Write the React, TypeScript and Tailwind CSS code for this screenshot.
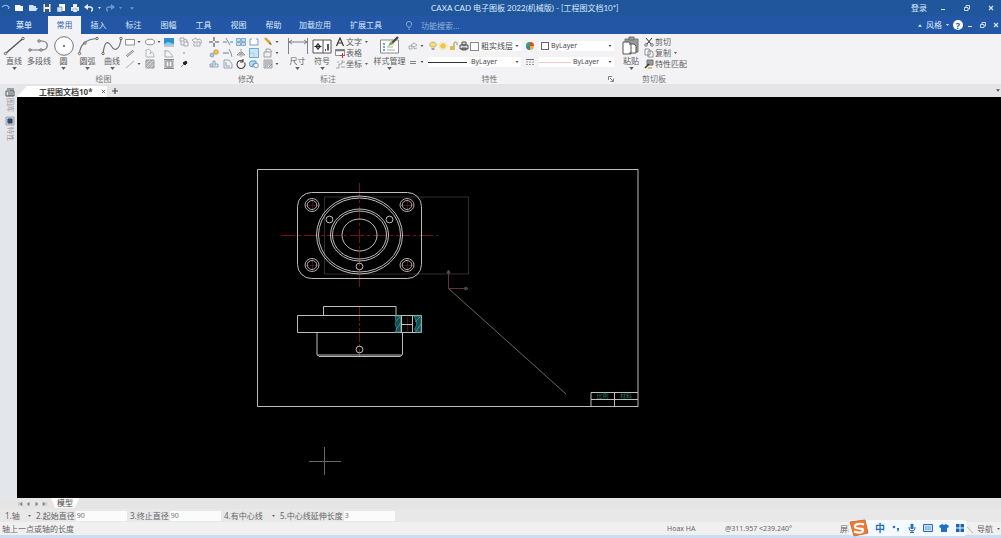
import React from "react";

type P = { className?: string; children?: React.ReactNode };

function Svg({ box, className, children }: P & { box: string }) {
  return (
    <svg viewBox={box} className={className} fill="none" stroke="#70757a" strokeWidth="1" aria-hidden="true">
      {children}
    </svg>
  );
}

function Small({ children }: P) {
  return <Svg box="0 0 10 10" className="h-[10px] w-[10px] shrink-0">{children}</Svg>;
}

function Arrow({ className = "h-[3px] w-[4px]" }: P) {
  return (
    <svg viewBox="0 0 6 4" className={"shrink-0 " + className} fill="currentColor" aria-hidden="true">
      <path d="M0 0h6L3 4z" />
    </svg>
  );
}

/* ---------- title bar ---------- */

const quick: { label: string; art: React.ReactNode }[] = [
  { label: "新建", art: <path d="M1 2h5l1 1h2v5H1z" fill="#f4f8ff" stroke="none" /> },
  { label: "打开", art: <path d="M1 2h4l1 1h2v2h2L8 8H1z" fill="#cfe2f8" stroke="none" /> },
  { label: "保存", art: <><path d="M1.500 1h7v8h-7z" fill="#e8eef5" stroke="none" /><path d="M3 1h4v3H3zM3 6h4v3H3z" fill="#456" stroke="none" /></> },
  { label: "另存为", art: <><path d="M3 1h6v7H3z" fill="#fff" stroke="none" /><path d="M1 4h5v5H1z" fill="#d4e2f2" stroke="#35629c" strokeWidth=".6" /></> },
  { label: "打印", art: <><path d="M1 4h8v4H1zM3 1h4v3H3z" fill="#e4ecf7" stroke="none" /><path d="M3 6h4v3H3z" fill="#fff" stroke="#6b86ac" strokeWidth=".6" /></> },
];

function TitleBar() {
  return (
    <header className="flex h-4 items-center bg-[#20579c] text-[8px] leading-none text-blue-100">
      <div className="flex w-[431px] shrink-0 items-center pl-px">
        <Svg box="0 0 10 10" className="mr-1 h-[10px] w-[9px]">
          <path d="M1 4c3-3 6-2 8 0M6 2l3 2-1 2" stroke="#8cc0f2" strokeWidth="1.200" />
        </Svg>
        {quick.map((q) => (
          <button key={q.label} aria-label={q.label} className="mr-1 h-[10px] w-[10px]">
            <Svg box="0 0 10 10" className="h-[10px] w-[10px]">{q.art}</Svg>
          </button>
        ))}
        <button aria-label="撤销" className="flex items-center gap-1">
          <Svg box="0 0 10 10" className="h-[10px] w-[10px]">
            <path d="M1 4h5c3 0 3 4 1 4" stroke="#e6f0ff" strokeWidth="1.500" /><path d="M4 1L0 4l4 3z" fill="#e6f0ff" stroke="none" />
          </Svg>
          <Arrow className="h-[2px] w-[3px]" />
        </button>
        <button aria-label="重做" className="ml-1 flex items-center gap-1 text-[#6d97d0]">
          <Svg box="0 0 10 10" className="h-[10px] w-[10px]">
            <path d="M9 4H4C1 4 1 8 3 8" stroke="#6d97d0" strokeWidth="1.300" /><path d="M6 1l4 3-4 3z" fill="#6d97d0" stroke="none" />
          </Svg>
          <Arrow className="h-[2px] w-[3px]" />
          <Arrow className="ml-1 h-[3px] w-[4px]" />
        </button>
      </div>
      <h1 className="font-[Lato,'Noto_Sans_CJK_SC',sans-serif] whitespace-nowrap">CAXA CAD 电子图板 2022(机械版) - [工程图文档10*]</h1>
      <div className="ml-auto flex items-center pr-[7px]">
        <button className="mr-[13px]">登录</button>
        <WindowButtons className="gap-[18px]" />
      </div>
    </header>
  );
}

function WindowButtons({ className = "" }: P) {
  return (
    <div className={"flex items-center " + className}>
      <button aria-label="最小化"><Svg box="0 0 6 6" className="h-[6px] w-[6px]"><path d="M1 4.500h4" stroke="#dbe8fb" /></Svg></button>
      <button aria-label="还原"><Svg box="0 0 6 6" className="h-[6px] w-[6px]"><path d="M.5 2.500h3.500v3H.5zM2 2V.5h3.500v3.500H4" stroke="#dbe8fb" strokeWidth=".9" /></Svg></button>
      <button aria-label="关闭"><Svg box="0 0 6 6" className="h-[6px] w-[6px]"><path d="M1 1l4 4M5 1L1 5" stroke="#dbe8fb" strokeWidth="1.100" /></Svg></button>
    </div>
  );
}

/* ---------- ribbon tabs ---------- */

const tabs = ["插入", "标注", "图幅", "工具", "视图", "帮助"];

function RibbonTabs() {
  return (
    <nav className="flex h-[18px] items-center bg-[#2357a5] text-[8px] leading-none text-blue-100">
      <button className="h-full w-12 shrink-0 font-medium">菜单</button>
      <button className="h-full w-[33px] shrink-0 bg-[#f3f3f5] text-[#2f62ad]">常用</button>
      {tabs.map((t) => (
        <button key={t} className="h-full w-[35px] shrink-0">{t}</button>
      ))}
      <button className="h-full w-[48px] shrink-0 whitespace-nowrap">加载应用</button>
      <button className="h-full w-[54px] shrink-0 whitespace-nowrap">扩展工具</button>
      <label className="ml-3 flex items-center gap-2 text-[#91b2df]">
        <Svg box="0 0 8 10" className="h-[9px] w-[8px]">
          <path d="M3 7C3 6 1 5 1 3.500a3 3 0 016 0C7 5 5 6 5 7zM3 9h2" stroke="#8fbdf0" strokeWidth=".9" />
        </Svg>
        <input className="w-[60px] bg-transparent placeholder:text-[#91b2df]" placeholder="功能搜索..." aria-label="功能搜索" />
      </label>
      <div className="ml-auto flex items-center pr-[2px]">
        <button className="flex items-center gap-1"><Arrow className="h-[3px] w-[4px] rotate-180" />风格<Arrow className="h-[2px] w-[3px]" /></button>
        <button aria-label="帮助" className="mx-1 flex h-[10px] w-[10px] items-center justify-center rounded-full bg-white text-[9px] font-bold text-[#2357a5]">?</button>
        <WindowButtons className="gap-[7px]" />
      </div>
    </nav>
  );
}

/* ---------- ribbon ---------- */

function Group({ title, className = "", children, launcher }: P & { title: string; launcher?: boolean }) {
  return (
    <section className={"flex shrink-0 flex-col " + className}>
      <div className="flex h-10 pt-[2px]">{children}</div>
      <div className="flex h-[10px] items-center">
        <h2 className="flex-1 text-center text-[#777]">{title}</h2>
        {launcher && (
          <button aria-label="特性设置" className="mr-1">
            <Svg box="0 0 6 6" className="h-[6px] w-[6px]"><path d="M.5 4V.5H4M2 2l3 3M5.500 2.500v3h-3" strokeWidth=".9" /></Svg>
          </button>
        )}
      </div>
    </section>
  );
}

function Big({ label, className = "w-[24px]", arrow = true, children }: P & { label: string; arrow?: boolean }) {
  return (
    <button className={"flex shrink-0 flex-col items-center whitespace-nowrap text-[#5c5c5c] " + className}>
      <Svg box="0 0 22 20" className="h-5 w-[22px] shrink-0">{children}</Svg>
      <span className="h-[9px] leading-[9px]">{label}</span>
      {arrow && <Arrow className="mt-[2px] h-[3px] w-[5px]" />}
    </button>
  );
}

function End({ x, y }: { x: number; y: number }) {
  return <circle cx={x} cy={y} r="1.200" fill="#fff" stroke="#555" strokeWidth=".9" />;
}

function Tool({ name, arrow, className = "w-[14px]", children }: P & { name: string; arrow?: boolean }) {
  return (
    <button aria-label={name} className={"flex h-[11px] shrink-0 items-center gap-[2px] text-[#555] " + className}>
      <Small>{children}</Small>
      {arrow && <Arrow className="h-[2px] w-[4px]" />}
    </button>
  );
}

function DrawGroup() {
  return (
    <Group title="绘图" className="w-[207px]">
      <div className="flex w-[125px] shrink-0 pl-[2px]">
        <Big label="直线" className="w-[24px]"><path d="M2.500 17.500L20 2.500" stroke="#555" strokeWidth="1.400" /><End x={2.500} y={17.500} /><End x={20} y={2.500} /></Big>
        <Big label="多段线" className="w-[26px]" arrow={false}><path d="M2 14h12c7 0 7-9 0-9h-3" strokeWidth="1.200" /><End x={2} y={14} /><End x={13} y={14} /><End x={11} y={5} /></Big>
        <Big label="圆" className="w-[23px]"><circle cx="11" cy="10" r="9.300" fill="#fff" /><circle cx="11" cy="10" r="1" fill="#555" stroke="none" /></Big>
        <Big label="圆弧" className="w-[25px]"><path d="M2.500 17.500C3 9 9 3 20 2.500" strokeWidth="1.200" /><End x={2.500} y={17.500} /><End x={8} y={7} /><End x={20} y={2.500} /></Big>
        <Big label="曲线" className="w-[24px]"><path d="M2 17.500C4 2 8 6 11 11s8 2 9-8.500" strokeWidth="1.200" /><End x={2} y={17.500} /><End x={20} y={2.500} /></Big>
      </div>
      <div className="grid grid-cols-[20px_19px_15px_13px_14px] content-start">
        <Tool name="矩形" arrow className="w-[18px]"><path d="M.5 2.500h9v5.500h-9z" fill="#fff" strokeWidth=".8" /></Tool>
        <Tool name="椭圆" arrow className="w-[18px]"><ellipse cx="5" cy="5" rx="4.500" ry="2.800" fill="#fff" strokeWidth=".8" /></Tool>
        <Tool name="图片"><path d="M0 1h10v7H0z" fill="#318fd0" stroke="none" /><path d="M0 7l4-2 6 2v1H0z" fill="#8bc8ee" stroke="none" /><path d="M0 9h10" strokeWidth=".7" /></Tool>
        <Tool name="块"><path d="M1 1h4v3H1zM2 4v4h3M5 5h4v4H5zM5 2l3 1v2" stroke="#8e8e96" strokeWidth=".7" /></Tool>
        <Tool name="外部引用"><path d="M2 5h6v4H2zM2 5L0 3l4-2 1 2 3-1 2 3-2 2M4 7h2" stroke="#8e8e96" strokeWidth=".7" /></Tool>
        <Tool name="平行线"><path d="M1 8l7-6M2 9l7-6" strokeWidth=".9" /></Tool>
        <Tool name="局部放大"><path d="M1 2v7h8M1 2c4-2 6 1 4 4M5 6c2-4 4-1 4 3" stroke="#9aa0a5" strokeWidth=".7" /></Tool>
        <Tool name="样条"><path d="M1 9V2M1 3c5-1 6 3 8 6M1 9h8" stroke="#8a8f94" strokeWidth=".7" /></Tool>
        <Tool name="点"><circle cx="5" cy="5" r=".7" fill="#666" stroke="none" /></Tool>
        <span />
        <Tool name="中心线" arrow className="w-[18px]"><path d="M1 9l8-7" stroke="#999" strokeWidth=".8" /></Tool>
        <Tool name="填充"><path d="M1 1h8v8H1z" fill="#b5b5b5" stroke="#999" /><path d="M1 5l4-4M1 9l8-8M5 9l4-4" stroke="#eee" strokeWidth=".5" /></Tool>
        <Tool name="剖面线"><path d="M-1 .5h12v9H-1z" fill="#c9c9cb" strokeWidth=".8" /><path d="M2 2h6v6H2zM5 2v6" fill="#f2f2f2" strokeWidth=".8" /></Tool>
        <Tool name="刷子"><path d="M2 8l3-3" strokeWidth=".8" /><path d="M4 4l3-2 1 2-2 2z" fill="#222" stroke="#222" /></Tool>
      </div>
    </Group>
  );
}

function ModifyGroup() {
  return (
    <Group title="修改" className="w-[78px]">
      <div className="grid grid-cols-[14px_13px_13px_14px_20px] content-start pl-[2px]">
        <Tool name="平移"><path d="M5 0v4M5 6v4M0 5h4M6 5h4" stroke="#555" strokeWidth="1.200" /></Tool>
        <Tool name="裁剪"><path d="M0 5h4M7 5h3" stroke="#4389c7" /><path d="M3 1l4 7" strokeWidth=".8" /></Tool>
        <Tool name="阵列"><path d="M.5 1.500h4v3h-4zM5.500 1.500h4v3h-4zM.5 5.500h4v3h-4zM5.500 5.500h4v3h-4z" stroke="#6b9dc4" fill="#c4dcf0" strokeWidth=".8" /></Tool>
        <Tool name="拉伸"><path d="M1 2v6h8V2M1 2h2M7 2h2" stroke="#6688aa" strokeWidth=".8" fill="#fff" /></Tool>
        <Tool name="删除" arrow className="w-[20px]"><path d="M2 1l5 5" stroke="#e59b25" strokeWidth="2.400" /><path d="M7 5l2 3-3-1z" fill="#754d2a" stroke="none" /></Tool>
        <Tool name="复制"><circle cx="7" cy="4" r="2.300" fill="#f1c54c" stroke="#a9822a" strokeWidth=".6" /><circle cx="3" cy="7" r="2" fill="#a8cbe5" strokeWidth=".5" /></Tool>
        <Tool name="延伸"><path d="M0 5h6" stroke="#4389c7" /><path d="M6 1l2 4 1 4" strokeWidth=".8" /></Tool>
        <Tool name="镜像"><path d="M5 1v8M4 4L1 7h3zM6 4l3 3H6z" strokeWidth=".7" /></Tool>
        <Tool name="缩放"><path d="M.5.5h9v9h-9z" fill="#cce6f7" stroke="#4e9acb" strokeWidth=".8" /><path d="M1 5h4v4" stroke="#8dbddd" strokeWidth=".6" /></Tool>
        <Tool name="分解" arrow className="w-[20px]"><path d="M1 4h7v5H1zM3 4V1h4l2 3" stroke="#8e8e92" strokeWidth=".8" fill="#eee" /></Tool>
        <Tool name="偏移"><path d="M1 8V5h3V2h2v3h3v3zM3 8V6h4" stroke="#7790a8" strokeWidth=".8" /></Tool>
        <Tool name="倒角"><path d="M1 1h5l3 4v4H1zM3 3v4h4" stroke="#7790a8" strokeWidth=".8" /></Tool>
        <Tool name="旋转"><path d="M7 2a4 4 0 101.500 1.500M7 0v3H4" stroke="#444" strokeWidth="1.100" /></Tool>
        <Tool name="缩放图形"><path d="M1 7a3 3 0 013-5h3v3H4v3z" stroke="#3f87bd" fill="#b9d9ee" strokeWidth=".8" /><circle cx="7" cy="6.500" r="2.300" stroke="#4586ad" fill="#fff" strokeWidth=".8" /></Tool>
        <Tool name="编辑" arrow className="w-[20px]"><path d="M1 1h8v8H1z" fill="#ddd" stroke="#8e8e92" strokeWidth=".8" /><path d="M2 3h6M2 5h6M2 7h3M6 8l3-3" strokeWidth=".7" /></Tool>
      </div>
    </Group>
  );
}

function Row({ label, arrow, children }: P & { label: string; arrow?: boolean }) {
  return (
    <button className="flex h-[11px] items-center gap-px whitespace-nowrap text-[#5c5c5c]">
      <Small>{children}</Small>
      {label}
      {arrow && <Arrow className="ml-[2px] h-[2px] w-[3px]" />}
    </button>
  );
}

function NoteGroup() {
  return (
    <Group title="标注" className="w-[86px]">
      <Big label="尺寸" className="w-[25px]"><path d="M1.500 2v16M20.500 2v16M2 6h18M5 4L2 6l3 2M17 4l3 2-3 2" strokeWidth=".9" /></Big>
      <Big label="符号" className="w-[24px]"><path d="M2 4h18v13H2zM12 4v13" fill="#fff" stroke="#555" /><circle cx="7" cy="10.500" r="2" stroke="#222" /><path d="M3.500 10.500h7M7 7v7" stroke="#222" /><path d="M14 14h1M17 8v6.500" stroke="#222" strokeWidth="1.500" /></Big>
      <div className="flex flex-col pl-[1px]">
        <Row label="文字" arrow><path d="M1.500 9L5 1l3.500 8M3 6h4" stroke="#333" strokeWidth="1.200" /></Row>
        <Row label="表格"><path d="M.5 1.500h9v6h-9z" fill="#fff" strokeWidth=".8" /><path d="M.5 2.500h9" strokeWidth="1.500" /><path d="M7.500 5v5M5 7.500h5" stroke="#bd3d48" strokeWidth="1.200" /></Row>
        <Row label="坐标" arrow><path d="M1 9h3V5h3V1M7 3h3M2 3h2M6 8h4" stroke="#8a8f94" strokeWidth=".8" /></Row>
      </div>
    </Group>
  );
}

function Combo({ label, value, className, children }: P & { label: string; value: string }) {
  return (
    <div className={"flex h-[10px] shrink-0 items-center bg-white pr-[2px] text-[#4c4c4c] " + className}>
      {children}
      <select aria-label={label} className="h-[10px] min-w-0 flex-1 appearance-none bg-transparent p-0 leading-[10px]">
        <option>{value}</option>
      </select>
      <Arrow className="h-[2px] w-[4px]" />
    </div>
  );
}

function PropertyGroup() {
  return (
    <Group title="特性" launcher className="w-[247px]">
      <Big label="样式管理" className="w-[37px]">
        <path d="M1.500 4h18v13h-18z" fill="#fff" stroke="#888" /><path d="M4 8h2M4 11h2M4 14h2" stroke="#468bc8" strokeWidth="1.400" /><path d="M8 11h6M8 14h8" stroke="#aaa" /><path d="M13 7l6-6" stroke="#484848" strokeWidth="2.400" /><path d="M9 10l3-5 3 3z" fill="#85a548" stroke="none" />
      </Big>
      <div className="flex flex-col gap-[6px] pt-[5px]">
        <div className="flex h-[10px] items-center">
          <Tool name="图层" arrow className="w-[20px]"><path d="M1 8V5h3v3zM3 4l3-2 3 2-3 2zM6 6v2l3-1" stroke="#8a8f94" strokeWidth=".7" /></Tool>
          <Tool name="打开图层" className="w-[10px]"><path d="M3 6C0 3 3 1 5 1s5 2 2 5z" fill="#f5df70" stroke="#a6a06d" strokeWidth=".7" /><path d="M3.500 8h3" stroke="#555" /></Tool>
          <Tool name="冻结图层" className="w-[11px]"><circle cx="5" cy="5" r="2.800" fill="#f5c43c" stroke="none" /><circle cx="5" cy="5" r="4" stroke="#f5d675" strokeDasharray="1 1" /></Tool>
          <Tool name="锁定图层" className="w-[10px]"><path d="M1 5h5v4H1z" fill="#e1b85a" stroke="none" /><path d="M5 5V2c1-2 4-1 3 2" stroke="#96875e" /></Tool>
          <Tool name="打印图层" className="w-[11px]"><path d="M1 4h8v4H1zM3 1h4v3H3zM3 7h4v2H3z" fill="#ddd" stroke="#444" strokeWidth=".9" /></Tool>
          <Combo label="当前图层" value="粗实线层" className="w-[51px]"><span className="mr-[2px] h-[9px] w-[9px] border border-[#888] bg-white" /></Combo>
          <Tool name="颜色" className="ml-1 w-[14px]"><circle cx="5" cy="5" r="4" fill="#e9b22e" stroke="none" /><path d="M5 5V1a4 4 0 00-4 4z" fill="#41a45a" stroke="none" /><path d="M5 5V1a4 4 0 014 4z" fill="#da4c39" stroke="none" /><path d="M5 5H1a4 4 0 004 4z" fill="#377fce" stroke="none" /></Tool>
          <Combo label="颜色" value="ByLayer" className="w-[75px] pl-[2px] text-[7px]"><span className="mr-[2px] h-[8px] w-[8px] border border-[#5d6674] bg-white" /></Combo>
        </div>
        <div className="flex h-[10px] items-center">
          <Tool name="线型" arrow className="w-[20px]"><path d="M2 4.500h6M2 6.500h6" strokeWidth=".9" /></Tool>
          <Combo label="线型" value="ByLayer" className="w-[93px] text-[7px]"><span className="mr-1 h-px w-[39px] bg-[#333]" /></Combo>
          <Tool name="线宽" className="ml-1 w-[14px]"><path d="M1 2.500h8" /><path d="M1 5h8M1 7.500h8" stroke="#999" strokeDasharray="2 1" /></Tool>
          <Combo label="线宽" value="ByLayer" className="w-[75px] text-[7px]"><span className="mr-[2px] h-px w-[32px] bg-[#f0c8cb]" /></Combo>
        </div>
      </div>
    </Group>
  );
}

function ClipboardGroup() {
  return (
    <Group title="剪切板" className="w-[72px]">
      <Big label="粘贴" className="w-[26px]"><path d="M5 3h13v13H5z" fill="#999" stroke="#777" /><path d="M9 1h5v3H9z" fill="#999" /><path d="M3 6h6l2 2v10H3zM9 8h5l2 2v7H9" fill="#fff" stroke="#555" /></Big>
      <div className="flex flex-col">
        <Row label="剪切"><path d="M2 1l5 6M8 1L3 7" stroke="#333" /><circle cx="2" cy="8" r="1.300" /><circle cx="8" cy="8" r="1.300" /></Row>
        <Row label="复制" arrow><path d="M1 1h4l1 1v5H1zM4 3h4l1 2v4H4z" fill="#fff" strokeWidth=".8" /></Row>
        <Row label="特性匹配"><path d="M3 1h6v5H3z" fill="#999" /><path d="M1 9l4-4" stroke="#333" strokeWidth="1.500" /><path d="M4 9h4" stroke="#d8ac36" strokeWidth="1.500" /></Row>
      </div>
    </Group>
  );
}

/* ---------- drawing area ---------- */

const bolts = [[312, 205], [407, 205], [312, 265], [407, 265]];
const pins = [[329.5, 219.5], [389.5, 219.5], [359.5, 266.5], [359.5, 349.5]];

function Drawing() {
  return (
    <svg viewBox="17 97 984 401" preserveAspectRatio="xMinYMin meet" className="h-full w-full" fill="none" stroke="#bebebe" strokeWidth="1" role="img" aria-label="模型">
      <path d="M257.500 169.500h380.500v237H257.500z" stroke="#bcbcbc" />
      <path d="M324.500 197h144v77h-144z" stroke="#352c2e" />
      <g stroke="#741419">
        <path d="M281 235.500h157M359.500 183v104" strokeDasharray="14 3 3 3" />
        <path d="M359.500 307v50" strokeDasharray="14 2 3 2" />
        <path d="M407.500 317v14M400 205.500h14M407.500 198v14M305 205.500h14M312.500 198v14M305 265.500h14M312.500 258v14M400 265.500h14M407.500 258v14" stroke="#451115" />
      </g>
      <rect x="297.500" y="192.500" width="124" height="86" rx="14" />
      <ellipse cx="359.500" cy="235" rx="43" ry="39" />
      <ellipse cx="359.500" cy="235" rx="41" ry="37" />
      <ellipse cx="359.500" cy="235" rx="29" ry="26" />
      <ellipse cx="359.500" cy="235" rx="27" ry="24" />
      <ellipse cx="359.500" cy="235" rx="17.500" ry="16" />
      {bolts.map(([x, y]) => (
        <g key={x + "-" + y} strokeWidth=".9">
          <ellipse cx={x} cy={y} rx="7" ry="6.500" />
          <ellipse cx={x} cy={y} rx="4.800" ry="4.500" />
        </g>
      ))}
      {pins.map(([x, y]) => <circle key={x + "-" + y} cx={x} cy={y} r="3.400" />)}
      <path d="M323.500 315v-8.500h72.500v8.500M297.500 315.500h124v17h-124zM317 332.500v22l2 2h81.500l2-2v-22M317 355h85" />
      <path d="M395 316h5.500v16H395c4-5-2-6 1-11zM414 316h7v16h-5c-4-5 3-5 0-11z" fill="#174d50" stroke="#2f8f90" strokeWidth=".8" />
      <path d="M396 330l5-8M396 321l4-4M415 322l5-5M416 331l5-7" stroke="#59a9aa" strokeWidth=".7" />
      <path d="M401.500 315v17M412.500 315v17M401.500 324.500h11" />
      <path d="M448.500 288v-17M448.500 288.500h18" stroke="#60333a" />
      <path d="M447 273l1.500-3 1.500 3zM465 287l3 1.500-3 1.500z" stroke="#645155" />
      <path d="M448.500 288.500L566 394" stroke="#5d6b5d" />
      <path d="M591 406.500v-14h47M614.500 392.500v14M591 399.500h47" />
      <path d="M309 461.500h32M324.500 447v28" stroke="#666" />
      <g fill="#267462" stroke="none" fontSize="6" fontFamily="Noto Sans CJK SC, sans-serif" textAnchor="middle">
        <text x="602.500" y="398">比例</text>
        <text x="626" y="398">材料</text>
      </g>
    </svg>
  );
}

function SideItem({ label, children }: P & { label: string }) {
  return (
    <button className="flex flex-col items-center gap-px text-[7px] leading-none text-[#999]">
      <Svg box="0 0 10 10" className="h-[10px] w-[10px]">{children}</Svg>
      <span className="[text-orientation:sideways] [writing-mode:vertical-rl]">{label}</span>
    </button>
  );
}

function Workspace() {
  return (
    <div className="flex min-h-0 flex-1">
      <aside className="flex w-[17px] shrink-0 flex-col items-center gap-1 bg-[#e3e7eb] pt-[3px] pl-[3px]">
        <SideItem label="图库"><path d="M1 4h8v5H1zM2 2h3M6 1v3M8 1v3M3 6h5M3 8h5" stroke="#555" /></SideItem>
        <SideItem label="特性"><path d="M1 1h8v8H1z" fill="#c3c9d0" stroke="#a2a9b1" /><path d="M3 3h4v4H3z" fill="#245588" stroke="#345" /></SideItem>
      </aside>
      <div className="flex min-w-0 flex-1 flex-col">
        <div className="flex h-[13px] shrink-0 items-center bg-[#e5e5e7] text-[8px] text-[#444]">
          <div className="flex h-[11px] w-[90px] items-center gap-2 self-end bg-white pr-1 pl-[22px] [clip-path:polygon(10px_0,100%_0,100%_100%,0_100%)]">
            <span className="font-bold whitespace-nowrap">工程图文档10*</span>
            <button aria-label="关闭文档" className="ml-auto"><Svg box="0 0 6 6" className="h-[5px] w-[5px]"><path d="M1 1l4 4M5 1L1 5" stroke="#555" /></Svg></button>
          </div>
          <button aria-label="新建文档" className="ml-1"><Svg box="0 0 8 8" className="h-[8px] w-[8px]"><path d="M4 1v6M1 4h6" stroke="#444" strokeWidth="1.200" /></Svg></button>
          <button aria-label="文档列表" className="mr-px ml-auto text-[#555]"><Arrow /></button>
        </div>
        <main className="min-h-0 flex-1 overflow-hidden bg-black"><Drawing /></main>
      </div>
    </div>
  );
}

/* ---------- bottom bars ---------- */

const steps = ["M1 0v5M5 0L2 2.500 5 5z", "M4 0L1 2.500 4 5z", "M2 0l3 2.500L2 5z", "M5 0v5M1 0l3 2.500L1 5z"];

function Field({ label, value, id, className }: { label: string; value: string; id: string; className: string }) {
  return (
    <div className={"flex shrink-0 items-center gap-px whitespace-nowrap " + className}>
      <label htmlFor={id}>{label}</label>
      <input id={id} defaultValue={value} className="h-[10px] w-0 flex-1 bg-[#fbfbfb] pl-px text-[7px] leading-[10px] text-[#777]" />
    </div>
  );
}

function Choice({ label, value, id, className }: { label: string; value: string; id: string; className: string }) {
  return (
    <div className={"flex shrink-0 items-center " + className}>
      <label htmlFor={id}>{label}</label>
      <select id={id} className="h-[10px] w-0 flex-1 appearance-none bg-transparent p-0 leading-[10px]"><option>{value}</option></select>
      <Arrow className="h-[2px] w-[3px]" />
    </div>
  );
}

function ImeBar() {
  return (
    <div className="absolute right-[34px] bottom-[2px] flex h-[16px] items-center gap-[6px] rounded bg-[#f4faff] pr-[2px] text-[#2b70be]">
      <Svg box="0 0 20 18" className="h-[18px] w-[20px]">
        <path d="M1 3l15-2 3 13-14 3z" fill="#ec7a38" stroke="#d96a2a" />
        <path d="M15 5.500C11 4 5 5 6 8s9 0 8 3.500-6 2-9 1" stroke="#fff" strokeWidth="2.200" />
      </Svg>
      <button className="w-[10px] text-[10px] leading-none font-bold">中</button>
      <button aria-label="标点"><Svg box="0 0 10 10" className="h-[10px] w-[10px]"><circle cx="3" cy="4" r="1.300" fill="#2b70be" stroke="none" /><path d="M6 5h2v2L6.500 9z" fill="#2b70be" stroke="none" /></Svg></button>
      <button aria-label="语音"><Svg box="0 0 10 10" className="h-[10px] w-[10px]"><path d="M3.500 1h3v5h-3z" fill="#2b70be" stroke="none" /><path d="M2 4v1a3 3 0 006 0V4M5 8v2M3 9.500h4" stroke="#2b70be" /></Svg></button>
      <button aria-label="键盘"><Svg box="0 0 10 10" className="h-[10px] w-[10px]"><path d="M.5 1.500h9v7h-9z" fill="#d0e5fa" stroke="#2b70be" /><path d="M2 4h6M2 6h6" stroke="#2b70be" strokeDasharray="1 .6" /></Svg></button>
      <button aria-label="皮肤"><Svg box="0 0 10 10" className="h-[10px] w-[10px]"><path d="M3 1l2 1 2-1 3 2-1 2-1-.5V9H2V4.500L1 5 0 3z" fill="#1c71c9" stroke="none" /></Svg></button>
      <button aria-label="工具箱"><Svg box="0 0 10 10" className="h-[10px] w-[10px]"><path d="M1 1h3.500v3.500H1zM5.500 1H9v3.500H5.500zM1 5.500h3.500V9H1zM5.500 5.500H9V9H5.500z" fill="#1c65b7" stroke="none" /></Svg></button>
    </div>
  );
}

function BottomBars() {
  return (
    <footer className="relative shrink-0 text-[8px] leading-none text-[#666]">
      <div className="flex h-[11px] items-center bg-[#e5e5e6] pl-[18px]">
        {steps.map((d) => (
          <button key={d} aria-label="翻页" className="mr-[3px]"><svg viewBox="0 0 6 5" className="h-[4px] w-[5px]" fill="#888" stroke="#888" strokeWidth=".5"><path d={d} /></svg></button>
        ))}
        <button className="ml-px h-[10px] w-[28px] self-start bg-white text-[#444] [clip-path:polygon(0_0,100%_0,85%_100%,15%_100%)]">模型</button>
      </div>
      <div className="flex h-[13px] items-center bg-[#e8e8e9] pl-[5px]">
        <Choice id="mode" label="1." value="轴" className="w-[26px]" />
        <Field id="start" label="2.起始直径" value="90" className="ml-[5px] w-[91px]" />
        <Field id="end" label="3.终止直径" value="90" className="ml-[3px] w-[91px]" />
        <Choice id="axis" label="4." value="有中心线" className="ml-[3px] w-[51px]" />
        <Field id="extend" label="5.中心线延伸长度" value="3" className="ml-[5px] w-[115px]" />
      </div>
      <div className="flex h-[13px] items-center bg-[#f0f0f1] pl-[2px] whitespace-nowrap">
        <span className="flex-1">轴上一点或轴的长度</span>
        <span className="w-[58px] text-[7px]">Hoax HA</span>
        <span className="w-[115px] text-[7px]">@311.957 &lt;239.240°</span>
        <button className="w-[124px] text-left">屏幕点</button>
        <button className="flex w-[37px] items-center justify-end gap-1 pr-px"><span>╲</span>导航<Arrow className="h-[2px] w-[3px]" /></button>
      </div>
      <div className="h-[3px] bg-[#cbdcf3]" />
      <ImeBar />
    </footer>
  );
}

export default function App() {
  return (
    <div className="flex h-screen flex-col overflow-hidden bg-[#e5e5e7] font-['Noto_Sans','Noto_Sans_CJK_SC',sans-serif]">
      <TitleBar />
      <RibbonTabs />
      <div className="flex h-[50px] shrink-0 bg-[#f3f3f5] text-[8px] leading-none">
        <DrawGroup />
        <ModifyGroup />
        <NoteGroup />
        <PropertyGroup />
        <ClipboardGroup />
      </div>
      <div className="flex min-h-0 flex-1 flex-col text-[8px] leading-none"><Workspace /></div>
      <BottomBars />
    </div>
  );
}
